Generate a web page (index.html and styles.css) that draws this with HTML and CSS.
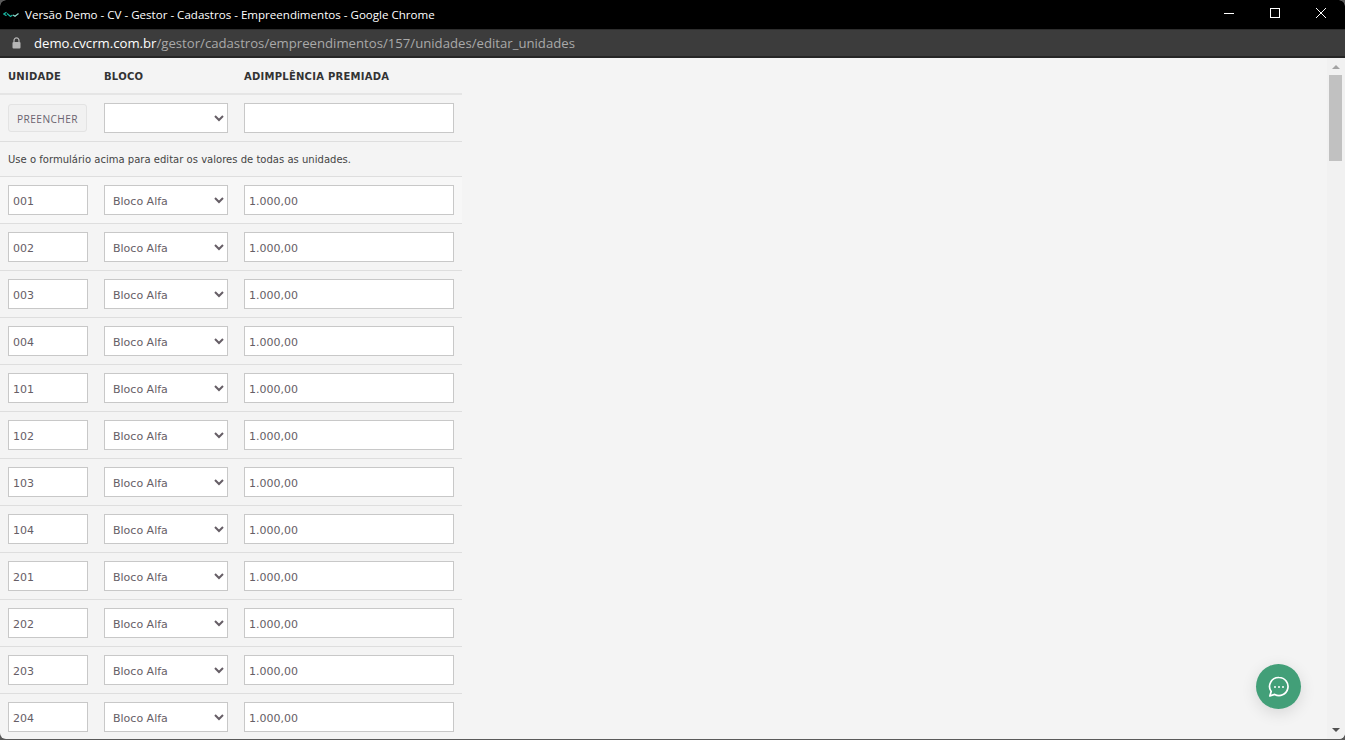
FILE: index.html
```html
<!DOCTYPE html>
<html lang="pt-BR">
<head>
<meta charset="utf-8">
<title>Versão Demo - CV - Gestor - Cadastros - Empreendimentos - Google Chrome</title>
<link rel="stylesheet" href="styles.css">
</head>
<body>
<div class="window">
  <header class="titlebar">
    <svg class="favicon" width="16" height="8" viewBox="0 0 16 8"><path d="M3.5 1.2 L0.8 3 L3.5 4.8" fill="none" stroke="#19b5a0" stroke-width="1.3"/><path d="M4 2.5 L7.5 5.5 L9.5 4" fill="none" stroke="#19b5a0" stroke-width="1.3"/><path d="M10 4 L12 5.2 L15.5 2.5" fill="none" stroke="#8fd8cc" stroke-width="1.2"/></svg>
    <span class="title">Versão Demo - CV - Gestor - Cadastros - Empreendimentos - Google Chrome</span>
    <div class="controls">
      <span class="ctl"><svg width="12" height="12" viewBox="0 0 12 12"><path d="M1 6.5H11" stroke="#fff" stroke-width="1"/></svg></span>
      <span class="ctl"><svg width="12" height="12" viewBox="0 0 12 12"><rect x="1.5" y="1.5" width="9" height="9" fill="none" stroke="#fff" stroke-width="1"/></svg></span>
      <span class="ctl"><svg width="12" height="12" viewBox="0 0 12 12"><path d="M1 1L11 11M11 1L1 11" stroke="#fff" stroke-width="1"/></svg></span>
    </div>
  </header>
  <div class="addressbar">
    <svg class="lock" width="9" height="12" viewBox="0 0 9 12"><path d="M2 5V3.4a2.5 2.5 0 0 1 5 0V5" fill="none" stroke="#b5b5b5" stroke-width="1.2"/><rect x="0.5" y="5" width="8" height="6.5" rx="1" fill="#b5b5b5"/></svg>
    <span class="url"><span class="host">demo.cvcrm.com.br</span>/gestor/cadastros/empreendimentos/157/unidades/editar_unidades</span>
  </div>
  <main class="viewport">
    <div class="content">
      <table class="grid">
        <thead>
          <tr><th class="c1">UNIDADE</th><th class="c2">BLOCO</th><th class="c3">ADIMPLÊNCIA PREMIADA</th></tr>
        </thead>
        <tbody>
          <tr class="filter">
            <td class="c1"><button class="fill" type="button">PREENCHER</button></td>
            <td class="c2"><select class="field sel"><option></option></select></td>
            <td class="c3"><input class="field wide" type="text"></td>
          </tr>
          <tr class="note"><td colspan="3">Use o formulário acima para editar os valores de todas as unidades.</td></tr>
          <tr class="first"><td class="c1"><input class="field unit" value="001"></td><td class="c2"><select class="field sel"><option>Bloco Alfa</option></select></td><td class="c3"><input class="field wide" value="1.000,00"></td></tr>
          <tr><td class="c1"><input class="field unit" value="002"></td><td class="c2"><select class="field sel"><option>Bloco Alfa</option></select></td><td class="c3"><input class="field wide" value="1.000,00"></td></tr>
          <tr><td class="c1"><input class="field unit" value="003"></td><td class="c2"><select class="field sel"><option>Bloco Alfa</option></select></td><td class="c3"><input class="field wide" value="1.000,00"></td></tr>
          <tr><td class="c1"><input class="field unit" value="004"></td><td class="c2"><select class="field sel"><option>Bloco Alfa</option></select></td><td class="c3"><input class="field wide" value="1.000,00"></td></tr>
          <tr><td class="c1"><input class="field unit" value="101"></td><td class="c2"><select class="field sel"><option>Bloco Alfa</option></select></td><td class="c3"><input class="field wide" value="1.000,00"></td></tr>
          <tr><td class="c1"><input class="field unit" value="102"></td><td class="c2"><select class="field sel"><option>Bloco Alfa</option></select></td><td class="c3"><input class="field wide" value="1.000,00"></td></tr>
          <tr><td class="c1"><input class="field unit" value="103"></td><td class="c2"><select class="field sel"><option>Bloco Alfa</option></select></td><td class="c3"><input class="field wide" value="1.000,00"></td></tr>
          <tr><td class="c1"><input class="field unit" value="104"></td><td class="c2"><select class="field sel"><option>Bloco Alfa</option></select></td><td class="c3"><input class="field wide" value="1.000,00"></td></tr>
          <tr><td class="c1"><input class="field unit" value="201"></td><td class="c2"><select class="field sel"><option>Bloco Alfa</option></select></td><td class="c3"><input class="field wide" value="1.000,00"></td></tr>
          <tr><td class="c1"><input class="field unit" value="202"></td><td class="c2"><select class="field sel"><option>Bloco Alfa</option></select></td><td class="c3"><input class="field wide" value="1.000,00"></td></tr>
          <tr><td class="c1"><input class="field unit" value="203"></td><td class="c2"><select class="field sel"><option>Bloco Alfa</option></select></td><td class="c3"><input class="field wide" value="1.000,00"></td></tr>
          <tr><td class="c1"><input class="field unit" value="204"></td><td class="c2"><select class="field sel"><option>Bloco Alfa</option></select></td><td class="c3"><input class="field wide" value="1.000,00"></td></tr>
        </tbody>
      </table>
    </div>
    <div class="scrollbar">
      <span class="arrow up"></span>
      <span class="thumb"></span>
      <span class="arrow down"></span>
    </div>
    <button class="chat" type="button" aria-label="Chat">
      <svg width="22" height="22" viewBox="0 0 22 22"><path d="M11 1.5a9 9 0 1 1 -4.3 16.9 L1.8 20 L3.2 15.6 A9 9 0 0 1 11 1.5Z" fill="none" stroke="#fff" stroke-width="1.7" stroke-linejoin="round"/><circle cx="7" cy="11" r="1" fill="#fff"/><circle cx="11" cy="11" r="1" fill="#fff"/><circle cx="15" cy="11" r="1" fill="#fff"/></svg>
    </button>
  </main>
</div>
</body>
</html>
```
FILE: styles.css
```css
* { box-sizing: border-box; }
html, body { margin: 0; height: 100%; background: #5a5a5a; overflow: hidden; }
.window {
  width: 1345px; height: 739px; display: flex; flex-direction: column;
  background: #f4f4f4; overflow: hidden;
  border-radius: 6px;
}
.titlebar {
  height: 29px; flex: none; background: #000; color: #fff; display: flex; align-items: center;
  font: 11.57px "Open Sans", "Noto Sans", sans-serif;
  padding-left: 3px;
}
.favicon { flex: none; margin-right: 6px; }
.title { flex: 1; }
.controls { display: flex; flex: none; align-self: flex-start; padding-right: 1px; }
.ctl { width: 46px; height: 26px; display: flex; align-items: center; justify-content: center; }
.addressbar {
  height: 29px; flex: none; background: #3c3c3c;
  border-top: 1px solid #2e2e2e; border-bottom: 2px solid #262626;
  display: flex; align-items: center; padding-left: 12px;
  font: 13.17px "Open Sans", "Noto Sans", sans-serif; color: #a9a9a9;
}
.lock { flex: none; margin-right: 13px; }
.host { color: #fff; }
.viewport { flex: 1; min-height: 0; display: flex; position: relative; overflow: hidden; }
.content { flex: 1; min-width: 0; overflow: hidden; }
.grid {
  width: 462px; border-collapse: collapse; table-layout: fixed;
  font: 11px "DejaVu Sans", Verdana, sans-serif; color: #555;
}
.grid th, .grid td { padding: 0; }
.grid .c1 { width: 104px; padding-left: 8px; }
.grid .c2 { width: 140px; }
.grid .c3 { width: 218px; }
.grid th {
  height: 36px; padding-top: 2px; text-align: left;
  font-size: 10px; font-weight: 700; letter-spacing: 0.25px; color: #333;
  border-bottom: 2px solid #e5e5e5;
}
.grid td { padding-top: 8px; padding-bottom: 8px; height: 47px; border-bottom: 1px solid #dedede; vertical-align: top; }
.grid tr.first { background: #f7f7f7; }
.grid tr.note td {
  height: 35px; padding: 0 0 0 8px; vertical-align: middle;
  font-size: 10px; letter-spacing: 0.02px; color: #444;
}
.field {
  display: block; height: 30px; border: 1px solid #c8c8c8; background: #fff; border-radius: 0;
  font: 11px "DejaVu Sans", Verdana, sans-serif; color: #665e66; outline: none; margin: 0;
}
input.field { padding: 2px 4px 0; }
.unit { width: 80px; }
.sel { width: 124px; padding: 2px 0 0 4px; }
.wide { width: 210px; }
.fill {
  display: block; width: 79px; height: 28px; margin-top: 1px; padding: 2px 0 0;
  border: 1px solid #e3e3e3; border-radius: 3px; background: #f1f1f1;
  font: 10.2px "Open Sans", "Noto Sans", sans-serif; letter-spacing: 0.4px; color: #6a6470;
}
.scrollbar {
  width: 18px; flex: none; background: #f1f1f1; display: flex; flex-direction: column; align-items: center;
  padding-right: 1px; position: relative;
}
.thumb { width: 13px; height: 86px; background: #c1c1c1; margin-top: 6px; }
.arrow { width: 0; height: 0; border-left: 4px solid transparent; border-right: 4px solid transparent; }
.up { border-bottom: 4px solid #a3a3a3; margin-top: 7px; }
.down { border-top: 4px solid #505050; position: absolute; top: 670px; }
.chat {
  position: absolute; left: 1256px; top: 606px; width: 45px; height: 45px; border: 0; padding: 0; border-radius: 50%;
  background: #429f78; display: flex; align-items: center; justify-content: center;
  box-shadow: 0 4px 16px rgba(0,0,0,0.12);
}
```
